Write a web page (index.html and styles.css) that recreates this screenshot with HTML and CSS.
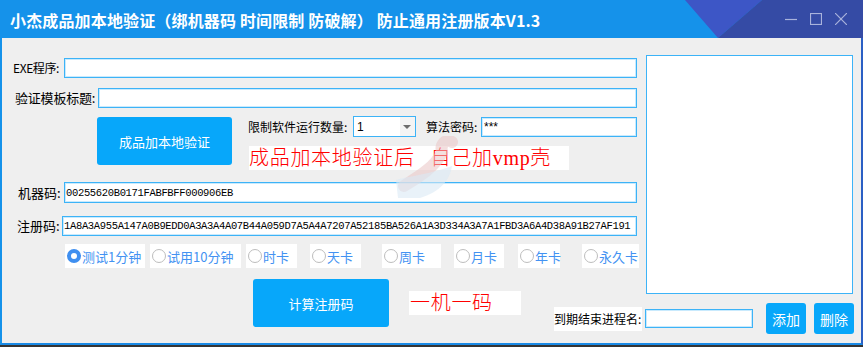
FILE: index.html
```html
<!DOCTYPE html>
<html lang="zh-CN">
<head>
    <meta charset="UTF-8">
    <title>小杰成品加本地验证</title>
    <link rel="stylesheet" href="styles.css">
</head>
<body>
<div class="window">
    <header class="titlebar">
        <h1 class="title">小杰成品加本地验证（绑机器码 时间限制 防破解） 防止通用注册版本V1.3</h1>
        <div class="caption">
            <svg class="deco" width="178" height="38" viewBox="0 0 178 38">
                <polygon points="0,0 77,0 33,38" fill="#3d56c6"/>
                <polygon points="77,0 178,0 178,38 33,38" fill="#354ba5"/>
            </svg>
            <svg class="winbtn" viewBox="0 0 12 12"><line x1="0" y1="6.5" x2="12" y2="6.5"/></svg>
            <svg class="winbtn" viewBox="0 0 12 12"><rect x="0.5" y="0.5" width="11" height="11"/></svg>
            <svg class="winbtn" viewBox="0 0 12 12"><line x1="0" y1="0" x2="12" y2="12"/><line x1="12" y1="0" x2="0" y2="12"/></svg>
        </div>
    </header>

    <main class="client">
        <section class="form">
            <div class="row">
                <span class="lbl lbl-exe">EXE程序:</span>
                <input class="field" type="text">
            </div>
            <div class="row row-2">
                <span class="lbl lbl-tpl">验证模板标题:</span>
                <input class="field" type="text">
            </div>
            <div class="row row-3">
                <button class="btn btn-big">成品加本地验证</button>
                <div class="side">
                    <div class="limits">
                        <span class="lbl lbl-small lbl-limit">限制软件运行数量:</span>
                        <div class="combo"><span class="combo-val">1</span><span class="combo-arrow"></span></div>
                        <span class="lbl lbl-small lbl-pwd">算法密码:</span>
                        <input class="field" type="text" value="***">
                    </div>
                    <div class="note note-wide">成品加本地验证后<span class="gap"></span>自己加vmp壳</div>
                </div>
            </div>
            <div class="row row-4">
                <span class="lbl lbl-mc">机器码:</span>
                <input class="field field-h21 code" type="text" value="00255620B0171FABFBFF000906EB">
            </div>
            <div class="row row-5">
                <span class="lbl lbl-reg">注册码:</span>
                <input class="field code" type="text" value="1A8A3A955A147A0B9EDD0A3A3A4A07B44A059D7A5A4A7207A52185BA526A1A3D334A3A7A1FBD3A6A4D38A91B27AF191">
            </div>
            <div class="opts">
                <label class="opt"><span class="dot on"></span>测试1分钟</label>
                <label class="opt"><span class="dot"></span>试用10分钟</label>
                <label class="opt"><span class="dot"></span>时卡</label>
                <label class="opt"><span class="dot"></span>天卡</label>
                <label class="opt"><span class="dot"></span>周卡</label>
                <label class="opt"><span class="dot"></span>月卡</label>
                <label class="opt"><span class="dot"></span>年卡</label>
                <label class="opt"><span class="dot"></span>永久卡</label>
            </div>
        </section>

        <textarea class="memo"></textarea>

        <div class="calc">
            <button class="btn btn-big">计算注册码</button>
            <div class="note note-short">一机一码</div>
        </div>

        <div class="expiry">
            <span class="exp-lbl">到期结束进程名:</span>
            <input class="field exp-field" type="text">
            <button class="btn btn-small">添加</button>
            <button class="btn btn-small">删除</button>
        </div>

        <svg class="watermark" width="72" height="66" viewBox="0 0 72 66">
            <path d="M62 6 C56 2 50 8 52 16 C46 30 30 40 14 50" stroke="#e9c4c4" stroke-width="12" fill="none" stroke-linecap="round" opacity="0.55"/>
            <path d="M6 44 C20 40 40 38 62 30 C60 44 50 56 30 62 L8 62 Z" fill="#dbe9f5" opacity="0.6"/>
        </svg>
    </main>
</div>
</body>
</html>
```

FILE: styles.css
```css
* {
    box-sizing: border-box;
}
body {
    margin: 0;
    background: #efefef;
    font-family: "Noto Sans CJK SC", sans-serif;
}
.window {
    width: 863px;
    height: 347px;
    display: flex;
    flex-direction: column;
    background: #efefef;
    border-bottom: 2px solid #353535;
}
.titlebar {
    flex: none;
    height: 38px;
    display: flex;
    background: #1592ea;
    color: #fff;
}
.title {
    margin: 0;
    padding: 2px 0 0 10px;
    font-size: 16px;
    font-weight: bold;
    line-height: 36px;
    letter-spacing: 0.15px;
    white-space: nowrap;
}
.caption {
    position: relative;
    margin-left: auto;
    width: 178px;
    padding-right: 16px;
    display: flex;
    justify-content: flex-end;
    align-items: center;
    gap: 13px;
}
.deco {
    position: absolute;
    top: 0;
    left: 0;
}
.winbtn {
    position: relative;
    width: 12px;
    height: 12px;
    stroke: #a9b3dc;
    stroke-width: 1.2;
    fill: none;
}

/* client area */
.client {
    position: relative;
    flex: 1;
    display: grid;
    grid-template-columns: 532px 101px 207px;
    grid-template-rows: 208px 31px 40px;
    grid-template-areas:
        "form form memo"
        "calc .    memo"
        "calc exp  exp";
    padding: 17px 8px 9px 11px;
    border-left: 2px solid #1592ea;
    border-right: 2px solid #2b5fc4;
    border-bottom: 2px solid #1a8ae6;
}
.form {
    grid-area: form;
    padding: 3px 9px 0 0;
    display: flex;
    flex-direction: column;
}
.row {
    display: flex;
    align-items: center;
}
.row-2 { margin-top: 10px; }
.row-3 { margin-top: 9px; align-items: flex-start; }
.row-4 { margin-top: 12px; }
.row-5 { margin-top: 13px; }

.lbl {
    flex: none;
    font-size: 13px;
    color: #000;
    white-space: nowrap;
    line-height: 20px;
}
.lbl-small { font-size: 12px; }
.lbl-exe {
    width: 51px;
    font-size: 12px;
    letter-spacing: -0.4px;
}
.lbl-tpl { width: 83px; margin-left: 2px; letter-spacing: -0.2px; }
.lbl-mc { width: 46px; margin-left: 5px; }
.lbl-reg { width: 45px; margin-left: 4px; }
.lbl-limit { width: 105px; }
.lbl-pwd { width: 55px; margin-left: 10px; }

.field {
    flex: 1;
    min-width: 0;
    height: 20px;
    margin: 0;
    padding: 0 2px;
    border: 1px solid #3cb3f7;
    box-shadow: inset 0 0 0 1px #c9eafd;
    background: #fff;
    font-family: "Liberation Sans", "Noto Sans CJK SC", sans-serif;
    font-size: 12px;
    color: #000;
    outline: none;
}
.field-h21 { height: 21px; }
.code {
    padding: 0 1px;
    font-family: "Liberation Mono", monospace;
    font-size: 10.5px;
    letter-spacing: -0.34px;
}

.btn {
    flex: none;
    border: none;
    border-radius: 3px;
    background: #07a7fa;
    color: #fff;
    font-family: "Noto Sans CJK SC", sans-serif;
    font-size: 13px;
    padding: 0;
    cursor: pointer;
}
.btn-big {
    width: 136px;
    height: 48px;
}
.row-3 .btn-big {
    margin-left: 84px;
    width: 135px;
}
.btn-small {
    width: 40px;
    height: 31px;
    margin-left: 13px;
    font-size: 14px;
}
.btn-small + .btn-small { margin-left: 8px; }

.side {
    flex: 1;
    min-width: 0;
    margin-left: 16px;
    margin-top: -1px;
    display: flex;
    flex-direction: column;
}
.limits {
    display: flex;
    align-items: center;
    height: 21px;
}
.combo {
    flex: none;
    width: 63px;
    height: 21px;
    display: flex;
    align-items: center;
    border: 1px solid #3cb3f7;
    background: #fff;
    font-size: 12px;
    font-family: "Liberation Sans", sans-serif;
}
.combo-val {
    flex: 1;
    padding-left: 3px;
}
.combo-arrow {
    width: 15px;
    height: 19px;
    background: #f4f4f4;
    position: relative;
}
.combo-arrow::after {
    content: '';
    position: absolute;
    left: 3px;
    top: 8px;
    border-left: 4px solid transparent;
    border-right: 4px solid transparent;
    border-top: 4px solid #6d6d6d;
}

.note {
    flex: none;
    background: #fff;
    color: #ff0000;
    font-family: "Liberation Serif", "Noto Sans CJK SC", serif;
    font-weight: 300;
    font-size: 20px;
    line-height: 24px;
    height: 24px;
    letter-spacing: 0.7px;
    white-space: nowrap;
}
.note .gap {
    display: inline-block;
    width: 16px;
}
.note-wide {
    margin-top: 9px;
    margin-left: 1px;
    width: 320px;
}
.note-short {
    width: 112px;
    margin-left: 20px;
    padding-left: 1px;
}

/* license type options */
.opts {
    margin-top: 8px;
    display: flex;
    height: 24px;
    padding-left: 52px;
}
.opt {
    flex: none;
    display: flex;
    align-items: center;
    background: #fff;
    color: #4392f2;
    font-size: 13px;
    height: 24px;
    padding-left: 2px;
    white-space: nowrap;
}
.opt:nth-child(1) { width: 80px; }
.opt:nth-child(2) { width: 91px; margin-left: 5px; }
.opt:nth-child(3) { width: 51px; margin-left: 5px; }
.opt:nth-child(4) { width: 51px; margin-left: 13px; }
.opt:nth-child(5) { width: 59px; margin-left: 21px; }
.opt:nth-child(6) { width: 50px; margin-left: 13px; }
.opt:nth-child(7) { width: 42px; margin-left: 14px; }
.opt:nth-child(8) { width: 57px; margin-left: 22px; }
.dot {
    width: 14px;
    height: 14px;
    margin-right: 1px;
    border: 1px solid #bdbdbd;
    border-radius: 50%;
    background: #fff;
    flex: none;
}
.dot.on {
    border: 4px solid #3f8ff0;
}

.memo {
    grid-area: memo;
    align-self: start;
    width: 207px;
    height: 239px;
    margin: 0;
    border: 1px solid #3cb3f7;
    background: #fff;
    resize: none;
    outline: none;
}

.calc {
    grid-area: calc;
    align-self: start;
    margin-top: 16px;
    padding-left: 240px;
    display: flex;
    align-items: center;
}

.expiry {
    grid-area: exp;
    align-self: end;
    justify-self: end;
    margin-right: -1px;
    height: 31px;
    display: flex;
    align-items: center;
}
.exp-lbl {
    background: #fff;
    width: 88px;
    height: 24px;
    line-height: 24px;
    font-size: 12px;
    white-space: nowrap;
}
.exp-field {
    flex: none;
    width: 108px;
    height: 19px;
    margin-left: 3px;
}

.watermark {
    position: absolute;
    left: 388px;
    top: 98px;
    pointer-events: none;
}
```
